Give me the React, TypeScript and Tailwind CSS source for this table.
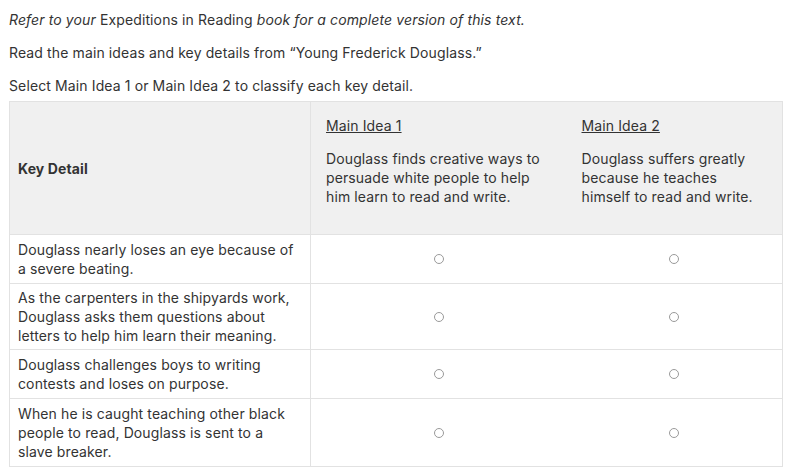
import React from "react";

const rows: { lines: string[]; h: string }[] = [
  { lines: ["Douglass nearly loses an eye because of", "a severe beating."], h: "h-[49px]" },
  { lines: ["As the carpenters in the shipyards work,", "Douglass asks them questions about", "letters to help him learn their meaning."], h: "h-[66px]" },
  { lines: ["Douglass challenges boys to writing", "contests and loses on purpose."], h: "h-[49px]" },
  { lines: ["When he is caught teaching other black", "people to read, Douglass is sent to a", "slave breaker."], h: "h-[68px]" },
];

function Radio() {
  return <span className="inline-block w-[10px] h-[10px] rounded-full border border-[#9a9a9a] bg-white" />;
}

export default function App() {
  return (
    <div className="bg-white w-[800px] h-[475px] pl-[9px] pt-[10px] text-[#333333] text-[14px] leading-[19px] tracking-[0.12px]" style={{ fontFamily: "Inter, 'Open Sans', sans-serif" }}>
      <p className="mb-[14px]"><i>Refer to your</i> Expeditions in Reading <i>book for a complete version of this text.</i></p>
      <p className="mb-[14px]">Read the main ideas and key details from “Young Frederick Douglass.”</p>
      <p className="mb-[6px]">Select Main Idea 1 or Main Idea 2 to classify each key detail.</p>
      <table className="w-[773px] border-collapse border border-[#e2e2e2] table-fixed">
        <colgroup>
          <col className="w-[301px]" />
          <col className="w-[256px]" />
          <col className="w-[216px]" />
        </colgroup>
        <thead>
          <tr className="bg-[#f0f0f0]">
            <th className="h-[133px] text-left font-bold px-[8px] align-middle border-r border-[#e2e2e2]">Key Detail</th>
            <th className="text-left font-normal pl-[15px] pr-[4px] pt-[14px] pb-[27px] align-top">
              <div className="underline mb-[14px]">Main Idea 1</div>
              <div>Douglass finds creative ways to</div>
              <div>persuade white people to help</div>
              <div>him learn to read and write.</div>
            </th>
            <th className="text-left font-normal pl-[15px] pr-[4px] pt-[14px] pb-[27px] align-top">
              <div className="underline mb-[14px]">Main Idea 2</div>
              <div>Douglass suffers greatly</div>
              <div>because he teaches</div>
              <div>himself to read and write.</div>
            </th>
          </tr>
        </thead>
        <tbody>
          {rows.map((r, i) => (
            <tr key={i} className="border-t border-[#e2e2e2]">
              <td className={`${r.h} px-[8px] py-0 align-middle border-r border-[#e2e2e2]`}>
                {r.lines.map((l, j) => (
                  <div key={j}>{l}</div>
                ))}
              </td>
              <td className="align-middle"><div className="flex justify-center"><Radio /></div></td>
              <td className="align-middle"><div className="flex justify-center"><Radio /></div></td>
            </tr>
          ))}
        </tbody>
      </table>
    </div>
  );
}
